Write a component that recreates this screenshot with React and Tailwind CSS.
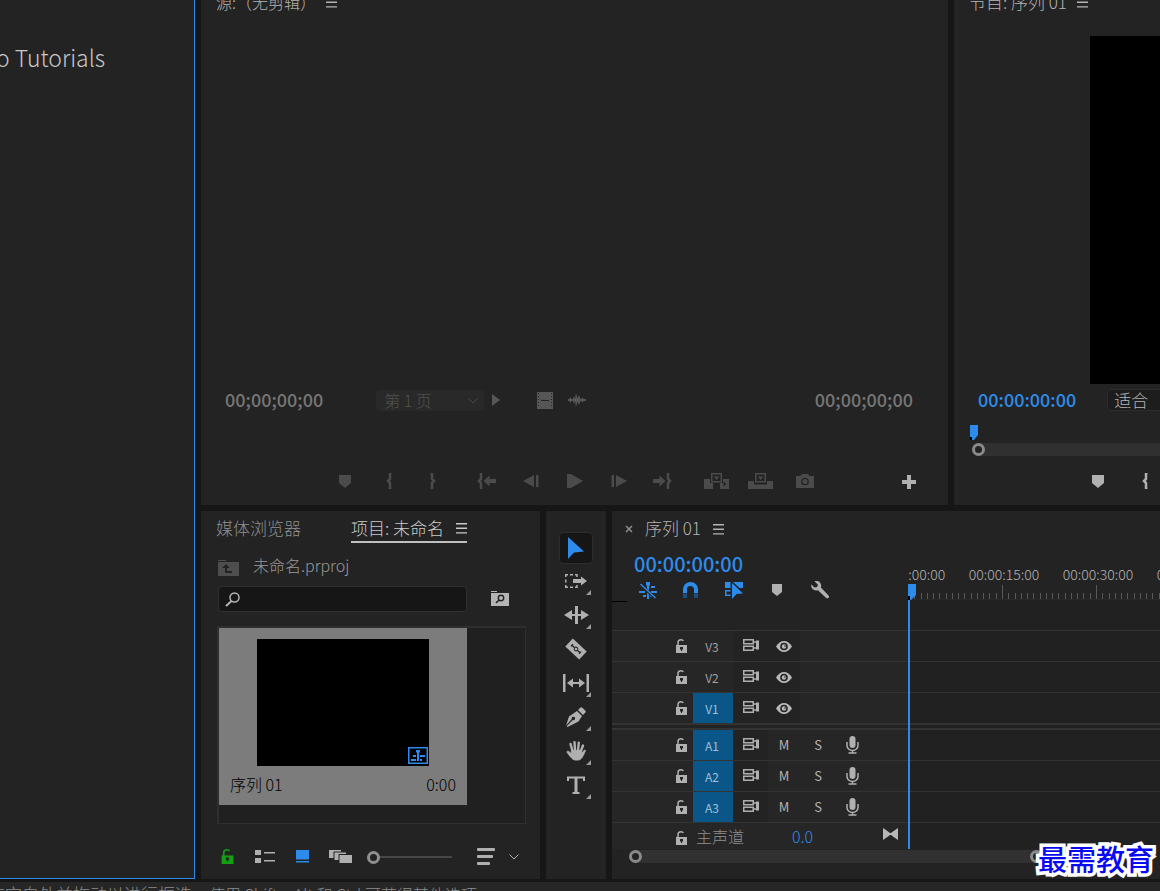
import React, { useState } from "react";

const TOOLS = [
  { id: "select", label: "选择工具" },
  { id: "track", label: "向前选择轨道工具", more: true },
  { id: "ripple", label: "波纹编辑工具", more: true },
  { id: "razor", label: "剃刀工具" },
  { id: "slip", label: "外滑工具", more: true },
  { id: "pen", label: "钢笔工具", more: true },
  { id: "hand", label: "手形工具", more: true },
  { id: "type", label: "文字工具", more: true },
];

const TRANSPORT = [
  [
    { id: "marker", label: "添加标记" },
    { id: "braceOpen", label: "标记入点" },
    { id: "braceClose", label: "标记出点" },
  ],
  [
    { id: "gotoIn", label: "转到入点" },
    { id: "stepBack", label: "后退一帧" },
    { id: "play", label: "播放" },
    { id: "stepForward", label: "前进一帧" },
    { id: "gotoOut", label: "转到出点" },
  ],
  [
    { id: "insert", label: "插入" },
    { id: "overwrite", label: "覆盖" },
    { id: "camera", label: "导出帧" },
  ],
];

const VIDEO_TRACKS = [
  { name: "V3", active: false },
  { name: "V2", active: false },
  { name: "V1", active: true },
];

const AUDIO_TRACKS = ["A1", "A2", "A3"];

const RULER = [
  "00:00:00:00",
  "00:00:15:00",
  "00:00:30:00",
  "00:00:45:00",
  "00:01:00:00",
  "00:01:15:00",
  "00:01:30:00",
  "00:01:45:00",
];

// width of 15 seconds on the ruler
const RULER_STEP = 94;

export default function App() {
  return (
    <div className="flex h-screen flex-col overflow-hidden bg-[#161616] font-['Noto_Sans_CJK_SC',sans-serif] text-base font-light text-[#b4b4b4]">
      <div className="flex min-h-0 flex-1 gap-1.5">
        <aside className="w-[195px] shrink-0 overflow-hidden border-r border-b border-[#2d8ceb] bg-[#232323] pt-10">
          <h2 className="-ml-1 text-[23px] leading-[34px] whitespace-nowrap text-[#c8c8c8]">
            o Tutorials
          </h2>
        </aside>
        <div className="flex min-w-0 flex-1 flex-col gap-1.5">
          <div className="flex min-h-0 flex-1 gap-1.5">
            <SourcePanel />
            <ProgramPanel />
          </div>
          <div className="flex h-[368px] shrink-0 gap-1.5">
            <ProjectPanel />
            <ToolsPanel />
            <TimelinePanel />
          </div>
        </div>
      </div>
      <footer className="mt-[3px] h-[9px] shrink-0 overflow-hidden bg-[#262626]">
        <p className="-ml-3 text-[17px] leading-6 whitespace-nowrap text-[#8c8c8c]">
          在空白处并拖动以进行框选。
          <span className="text-base leading-6">
            使用 Shift、Alt 和 Ctrl 可获得其他选项
          </span>
        </p>
      </footer>
      <div className="absolute right-1.5 bottom-[13px] text-[29px] leading-10 font-medium text-[#0a0af0] [-webkit-text-stroke:7px_white] [paint-order:stroke_fill]">
        最需教育
      </div>
    </div>
  );
}

function SourcePanel() {
  return (
    <section className="flex min-w-0 flex-1 flex-col overflow-hidden bg-[#232323]">
      <header className="-mt-4 flex h-9 shrink-0 items-center gap-2.5 pl-[15px]">
        <h2 className="leading-6">源:（无剪辑）</h2>
        <MenuButton />
      </header>
      <div className="flex-1" />
      <div className="flex h-8 items-center pr-[35px] pb-0.5 pl-6">
        <Timecode value="00;00;00;00" className="pb-0.5 text-lg text-[#767676]" />
        <div className="relative ml-[53px] w-[108px]">
          <select
            aria-label="页"
            disabled
            className="block h-[21px] w-full appearance-none rounded-sm bg-[#292929] pl-2 text-base leading-5 text-[#505050] opacity-100"
          >
            <option>第 1 页</option>
          </select>
          <Chevron className="pointer-events-none absolute top-2 right-1.5 text-[#4a4a4a]" />
        </div>
        <button aria-label="下一页" className="ml-2 text-[#565656]">
          <svg width="9" height="12" viewBox="0 0 9 12" fill="currentColor">
            <path d="M0 0l8 6-8 6z" />
          </svg>
        </button>
        <button aria-label="仅拖动视频" className="ml-9 text-[#565656]">
          <svg width="16" height="17" viewBox="0 0 16 17" fill="currentColor">
            <path d="M0 0h16v17H0z" />
            <path
              d="M1.500 1v15M14.500 1v15"
              stroke="#232323"
              strokeDasharray="1 2"
              strokeWidth="1"
            />
            <path d="M4 8h8v1H4z" fill="#232323" />
          </svg>
        </button>
        <button aria-label="仅拖动音频" className="ml-[15px] text-[#565656]">
          <svg width="18" height="14" viewBox="0 0 18 14" fill="currentColor">
            <path d="M0 6h1.500l1-2 1 2h1.500l1-3 1 3L8 0l1.500 5.500L11 2l1.500 4h1L14.500 4l1 2H18v2h-2.500l-1 2-1-2h-1L11 12 9.500 8.500 8 14 7 8 6 11 5 8H3.500l-1 2-1-2H0z" />
          </svg>
        </button>
        <Timecode
          value="00;00;00;00"
          className="ml-auto pb-0.5 text-lg text-[#767676]"
        />
      </div>
      <div className="mt-10 grid h-12 shrink-0 grid-cols-[1fr_auto_1fr] items-center">
        <div />
        <div className="flex gap-2.5">
          {TRANSPORT.map((group, i) => (
            <div key={i} className="flex">
              {group.map((b) => (
                <button
                  key={b.id}
                  aria-label={b.label}
                  disabled
                  className="flex h-8 w-11 items-center justify-center text-[#4b4b4b]"
                >
                  <TransportIcon id={b.id} />
                </button>
              ))}
            </div>
          ))}
        </div>
        <button
          aria-label="按钮编辑器"
          className="mt-0.5 mr-8 justify-self-end text-[#b0b0b0]"
        >
          <svg width="14" height="14" viewBox="0 0 14 14" fill="currentColor">
            <path d="M5 0h4v5h5v4H9v5H5V9H0V5h5z" />
          </svg>
        </button>
      </div>
    </section>
  );
}

function ProgramPanel() {
  return (
    <section className="flex w-[206px] shrink-0 flex-col overflow-hidden bg-[#232323]">
      <header className="-mt-4 flex h-9 shrink-0 items-center gap-2.5 pl-[15px]">
        <h2 className="text-[17px] leading-6 whitespace-nowrap">
          节目: 序列 01
        </h2>
        <MenuButton />
      </header>
      <div className="mt-4 ml-[136px] min-h-0 flex-1 bg-black" />
      <div className="mt-px flex h-8 items-center pb-0.5 pl-6">
        <Timecode value="00:00:00:00" className="pb-0.5 text-lg text-[#2d8ceb]" />
        <select
          aria-label="缩放级别"
          className="ml-[31px] h-[22px] w-24 shrink-0 appearance-none rounded-sm border border-[#2c2c2c] bg-[#1d1d1d] pl-1.5 text-[17px] leading-5"
        >
          <option>适合</option>
        </select>
      </div>
      <div className="h-10 pt-2 pl-4">
        <svg width="8" height="15" viewBox="0 0 8 15" className="block text-[#2d8ceb]">
          <path d="M0 0h8v10l-4 5H0z" fill="currentColor" />
          <path d="M0 12h2v3H0z" fill="#000" />
        </svg>
        <div className="mt-[3px] ml-0.5 flex h-[13px] items-center rounded-l-full bg-[#303030]">
          <Knob />
        </div>
      </div>
      <div className="flex h-12 items-center pl-[122px] text-[#b0b0b0]">
        <button
          aria-label="添加标记"
          className="flex h-8 w-11 shrink-0 items-center justify-center"
        >
          <TransportIcon id="marker" />
        </button>
        <button
          aria-label="标记入点"
          className="flex h-8 w-[50px] shrink-0 items-center justify-center"
        >
          <TransportIcon id="braceOpen" />
        </button>
      </div>
    </section>
  );
}

function ProjectPanel() {
  const [query, setQuery] = useState("");

  return (
    <section className="flex w-[339px] shrink-0 flex-col bg-[#232323]">
      <header className="flex h-9 shrink-0 items-center pl-[15px] text-[17px]">
        <button className="pb-0.5 text-[#8f8f8f]">媒体浏览器</button>
        <div className="ml-[50px] flex h-7 w-[116px] items-center justify-between border-b-2 border-[#c0c0c0] text-[#cacaca]">
          <button className="whitespace-nowrap">项目: 未命名</button>
          <MenuButton />
        </div>
      </header>
      <div className="flex h-[38px] shrink-0 items-center pl-[17px] text-[#999999]">
        <svg width="21" height="16" viewBox="0 0 21 16" className="mt-1">
          <path d="M0 0h8v1H0zM0 2h21v14H0z" fill="#4e4e4e" />
          <path d="M4 8l4-4 4 4H9v3h5v2H7V8z" fill="#232323" />
        </svg>
        <span className="ml-3.5 pb-0.5">未命名.prproj</span>
      </div>
      <div className="mt-px flex h-[26px] shrink-0 items-center pl-[17px]">
        <div className="relative w-[249px]">
          <input
            type="text"
            aria-label="搜索"
            value={query}
            onChange={(e) => setQuery(e.target.value)}
            className="block h-[26px] w-full rounded-sm border border-[#2f2f2f] bg-[#161616] pl-9 text-sm outline-none"
          />
          <svg
            width="16"
            height="16"
            viewBox="0 0 16 16"
            fill="none"
            stroke="#b4b4b4"
            className="pointer-events-none absolute top-1.5 left-[7px]"
          >
            <circle cx="9.500" cy="5.500" r="4.500" strokeWidth="1.500" />
            <path d="M6.500 9L1 14" strokeWidth="2" />
          </svg>
        </div>
        <button aria-label="从查询创建新的搜索素材箱" className="ml-6 pb-0.5">
          <svg width="18" height="15" viewBox="0 0 18 15">
            <path d="M0 0h6v1H0zM0 2h18v13H0z" fill="#b4b4b4" />
            <circle
              cx="10"
              cy="7"
              r="2.700"
              fill="none"
              stroke="#232323"
              strokeWidth="1.400"
            />
            <path d="M8 9l-3 3" stroke="#232323" strokeWidth="1.600" />
          </svg>
        </button>
      </div>
      <div className="mt-3.5 mr-3.5 ml-4 h-[198px] shrink-0 border-2 border-r border-b border-[#2f2f2f] bg-[#202020]">
        <figure className="h-[177px] w-[248px] bg-[#7c7c7c] px-[11px] pt-[11px] text-black">
          <div className="mx-auto flex h-[127px] w-[172px] items-end justify-end bg-black pr-px pb-0.5">
            <svg width="20" height="17" viewBox="0 0 20 17" fill="#2d8ceb">
              <path d="M.75.75h18.500v15.500H.75z" fill="#000" stroke="#2d8ceb" strokeWidth="1.500" />
              <path d="M8 3h4v2l-1 1v8H9V6L8 5zM5 8h3v2H5zM3 12h5v2H3zM12 8h5v2h-5zM12 12h2v2h-2z" />
            </svg>
          </div>
          <figcaption className="mt-1.5 flex justify-between leading-6">
            <span>序列 01</span>
            <span>0:00</span>
          </figcaption>
        </figure>
      </div>
      <div className="flex flex-1 items-center pt-2.5 pl-5 text-[#b0b0b0]">
        <button aria-label="项目可写" className="text-[#14a014]">
          <LockIcon size="lg" />
        </button>
        <button aria-label="列表视图" className="ml-[21px]">
          <svg width="20" height="13" viewBox="0 0 20 13" fill="currentColor">
            <path d="M0 0h6v5H0zM0 8h6v5H0zM9 2h11v1.500H9zM9 10h11v1.500H9z" />
          </svg>
        </button>
        <button aria-label="图标视图" className="ml-[21px]">
          <svg width="13" height="13" viewBox="0 0 13 13" fill="#2d8ceb">
            <path d="M0 0h13v9.500H0zM0 11h13v1.500H0z" />
          </svg>
        </button>
        <button aria-label="自由变换视图" className="ml-5">
          <svg width="23" height="13" viewBox="0 0 23 13" fill="currentColor">
            <path d="M0 0h12v1.500H4.500V8H0zM5.500 2.500H17V4H9.500v6h-4zM10.500 5H23v8H10.500z" />
          </svg>
        </button>
        <input
          type="range"
          aria-label="图标大小"
          min="0"
          max="100"
          defaultValue="0"
          className="ml-[15px] h-[13px] w-[85px] appearance-none bg-transparent [&::-webkit-slider-runnable-track]:h-0.5 [&::-webkit-slider-runnable-track]:bg-[#464646] [&::-webkit-slider-thumb]:-mt-[5px] [&::-webkit-slider-thumb]:size-[13px] [&::-webkit-slider-thumb]:appearance-none [&::-webkit-slider-thumb]:rounded-full [&::-webkit-slider-thumb]:border-[3px] [&::-webkit-slider-thumb]:border-[#8f8f8f] [&::-webkit-slider-thumb]:bg-[#232323]"
        />
        <button aria-label="排序图标" className="ml-[25px] flex items-center gap-3.5">
          <svg width="18" height="17" viewBox="0 0 18 17" fill="currentColor">
            <rect width="18" height="3" rx="1" />
            <rect y="7" width="16" height="3" rx="1" />
            <rect y="14" width="13" height="3" rx="1" />
          </svg>
          <Chevron />
        </button>
      </div>
    </section>
  );
}

function ToolsPanel() {
  const [tool, setTool] = useState("select");

  return (
    <nav className="flex w-[60px] shrink-0 flex-col items-center bg-[#232323] pt-5">
      {TOOLS.map((t) => (
        <button
          key={t.id}
          aria-label={t.label}
          onClick={() => setTool(t.id)}
          className="relative flex h-[34px] w-[34px] items-center justify-center text-[#b0b0b0]"
        >
          <span
            className={
              tool === t.id
                ? "flex h-8 w-[34px] items-center justify-center rounded-sm border border-[#2d2d2d] bg-[#161616] text-[#2d8ceb]"
                : "flex h-8 w-[34px] items-center justify-center pb-0.5"
            }
          >
            <ToolIcon id={t.id} />
          </span>
          {t.more && (
            <svg
              width="5"
              height="5"
              viewBox="0 0 5 5"
              className="absolute right-0.5 bottom-1"
            >
              <path d="M5 0v5H0z" fill="#9a9a9a" />
            </svg>
          )}
        </button>
      ))}
    </nav>
  );
}

function TimelinePanel() {
  return (
    <section className="flex min-w-0 flex-1 flex-col overflow-hidden bg-[#232323]">
      <header className="flex h-9 shrink-0 items-center pl-[13px]">
        <button aria-label="关闭" className="text-[#8f8f8f]">
          <svg width="8" height="8" viewBox="0 0 8 8" stroke="currentColor" strokeWidth="1.500">
            <path d="M1 1l6 6M7 1L1 7" />
          </svg>
        </button>
        <h2 className="mr-3 ml-3 pb-0.5 text-[17px]">序列 01</h2>
        <MenuButton />
      </header>

      <div className="flex">
        {/* Track headers */}
        <div className="w-[296px] shrink-0">
          <div className="h-[83px] pt-0.5">
            <Timecode
              value="00:00:00:00"
              className="block h-[30px] pl-[22px] text-xl leading-[30px] text-[#2d8ceb]"
            />
            <TimelineToolbar />
            <div className="h-px w-[15px] bg-black" />
          </div>
          {VIDEO_TRACKS.map((t) => (
            <div
              key={t.name}
              className="flex h-[31px] items-center border-t border-[#333333] bg-[#262626] pl-16"
            >
              <TrackCommon name={t.name} active={t.active} />
              <button
                aria-label="切换轨道输出"
                className="flex h-full w-8 items-center justify-center bg-[#232323]"
              >
                <svg width="16" height="11" viewBox="0 0 16 11">
                  <path
                    d="M0 5.500C2 2 5 0 8 0s6 2 8 5.500C14 9 11 11 8 11S2 9 0 5.500z"
                    fill="#b8b8b8"
                  />
                  <circle cx="8" cy="5.500" r="3.800" fill="#232323" />
                  <circle cx="8" cy="5.500" r="2.200" fill="#b8b8b8" />
                  <circle cx="9" cy="5" r=".8" fill="#232323" />
                </svg>
              </button>
            </div>
          ))}
          <div className="h-[7px] border-y-2 border-[#333333]" />
          {AUDIO_TRACKS.map((name) => (
            <div
              key={name}
              className="flex h-[31px] items-center border-b border-[#333333] bg-[#262626] pl-16 text-[13px] font-normal"
            >
              <TrackCommon name={name} active />
              <button aria-label="静音轨道" className="w-8">
                M
              </button>
              <button aria-label="独奏轨道" className="w-9">
                S
              </button>
              <button aria-label="画外音录制" className="flex w-8 justify-center">
                <svg width="13" height="18" viewBox="0 0 13 18">
                  <rect x="3.500" y="0" width="6" height="12" rx="3" fill="#b0b0b0" />
                  <path
                    d="M1 6v3.500a5.500 5 0 0 0 11 0V6M6.500 14v3M2.500 17h8"
                    fill="none"
                    stroke="#b0b0b0"
                    strokeWidth="1.500"
                  />
                </svg>
              </button>
            </div>
          ))}
          <div className="flex h-[26px] items-center bg-[#262626] pr-2.5 pl-16">
            <button aria-label="锁定轨道" className="pt-1">
              <LockIcon />
            </button>
            <span className="ml-[9px] leading-6 text-[#8f8f8f]">主声道</span>
            <span className="ml-12 leading-6 text-[#2d8ceb]">0.0</span>
            <svg width="15" height="12" viewBox="0 0 15 12" className="mb-1 ml-auto" fill="#b8b8b8">
              <path d="M0 0l6.500 4.500v3L0 12zM15 0L8.500 4.500v3L15 12z" />
              <path d="M6 5h3v2H6z" />
            </svg>
          </div>
        </div>

        {/* Ruler and lanes */}
        <div className="relative min-w-0 flex-1 overflow-hidden bg-[#212121]">
          <div className="h-[83px]">
            <Ruler />
          </div>
          {VIDEO_TRACKS.map((t) => (
            <div key={t.name} className="h-[31px] border-t border-[#333333]" />
          ))}
          <div className="h-[7px] border-y-2 border-[#333333]" />
          {AUDIO_TRACKS.map((name) => (
            <div key={name} className="h-[31px] border-b border-[#333333]" />
          ))}
          <div className="h-[26px]" />
          <div className="absolute top-[37px] bottom-0 left-0">
            <svg width="8" height="16" viewBox="0 0 8 16" className="block">
              <path d="M0 0h8v11l-5 5H0z" fill="#2d8ceb" />
              <path d="M0 12h2v4H0z" fill="#000" />
            </svg>
            <div className="h-full w-0.5 bg-[#2d8ceb]" />
          </div>
        </div>
      </div>

      <div className="mt-px mr-[117px] ml-[17px] flex h-[13px] shrink-0 items-center justify-between rounded-full bg-[#313131]">
        <Knob />
        <Knob />
      </div>
    </section>
  );
}

function TimelineToolbar() {
  const cell = "flex h-[22px] w-[43px] items-center justify-center";
  return (
    <div className="flex pl-3.5 text-[#2d8ceb]">
      <button aria-label="将序列作为嵌套插入" className={cell}>
        <svg width="18" height="17" viewBox="0 0 18 17">
          <path
            d="M7 0h4v3l-1 1v13H8V4L7 3zM4 5h3v2H4zM0 9h6v2H0zM4 13h3v2H4zM12 4h4v2h-4zM12 9h6v2h-6zM11 13h4v2h-4z"
            fill="currentColor"
          />
          <path d="M1 2l15 14" stroke="#232323" strokeWidth="3" />
          <path d="M1.500 2l15 14" stroke="currentColor" strokeWidth="1.500" />
        </svg>
      </button>
      <button aria-label="在时间轴中对齐" className={cell}>
        <svg width="15" height="16" viewBox="0 0 15 16" fill="none" strokeWidth="4">
          <path d="M2 11V7a5.500 5 0 0 1 11 0v4" stroke="currentColor" />
          <path d="M2 11.500V16M13 11.500V16" stroke="#1b5083" />
        </svg>
      </button>
      <button aria-label="链接选择项" className={cell}>
        <svg width="18" height="17" viewBox="0 0 18 17" fill="currentColor">
          <path d="M0 0h5.500v6H0zM8 0h10v6h-3.500z" />
          <path d="M5.500 8.750H.75v4.500H5.500" fill="none" stroke="currentColor" strokeWidth="1.500" />
          <path d="M7 1l11 10.500-6.500.5L7 17z" />
        </svg>
      </button>
      <button aria-label="添加标记" className={`${cell} text-[#b0b0b0]`}>
        <svg width="10" height="12" viewBox="0 0 10 12" fill="currentColor">
          <path d="M0 0h10v8l-5 4-5-4z" />
        </svg>
      </button>
      <button aria-label="时间轴显示设置" className={`${cell} text-[#b0b0b0]`}>
        <svg width="18" height="18" viewBox="0 0 18 18" fill="currentColor">
          <path d="M3.500.5C5.500-.4 8 0 9.300 1.900c1 1.500 1.100 3 .6 4.500l7.600 8c.7.800.7 1.700 0 2.400-.8.800-1.800.8-2.600 0L7 9.200C4.800 9.800 2.500 9.300 1.200 7.600.2 6.300 0 4.800.3 3.600l3.200 3 2.700-.6.700-2.600z" />
        </svg>
      </button>
    </div>
  );
}

function TrackCommon({ name, active }) {
  return (
    <>
      <button aria-label={`锁定 ${name}`} className="w-[17px]">
        <LockIcon />
      </button>
      <button
        className={
          active
            ? "h-full w-10 bg-[#0a5688] pt-0.5 pr-0.5 text-xs font-normal text-[#9fc0d6]"
            : "h-full w-10 pt-0.5 pr-0.5 text-xs font-normal text-[#a0a0a0]"
        }
      >
        {name}
      </button>
      <button
        aria-label="切换同步锁定"
        className="flex h-full w-[35px] items-center justify-center bg-[#232323] pb-0.5"
      >
        <svg
          width="16"
          height="12"
          viewBox="0 0 16 12"
          fill="none"
          stroke="#b0b0b0"
          strokeWidth="1.500"
        >
          <path d="M.75.75h9.500v4H.75zM.75 7.250h9.500v4H.75z" />
          <path d="M14.500 1.500v9" strokeWidth="3" />
          <path d="M11 3h3M11 9h3" strokeWidth="1.500" />
        </svg>
      </button>
    </>
  );
}

function Ruler() {
  const ticks = [];
  for (let i = 0; i <= (RULER.length - 1) * 15; i++) {
    const x = 0.5 + Math.round((i * RULER_STEP) / 15);
    ticks.push(<path key={i} d={`M${x} ${i % 15 === 0 ? 0 : 8}V14`} />);
  }

  return (
    <div className="overflow-hidden border-b border-[#282828] bg-[#232323] pt-3.5">
      <div className="-ml-[45px] flex text-sm leading-[26px]">
        {RULER.map((label) => (
          <span key={label} className="w-[94px] shrink-0 text-center">
            {label}
          </span>
        ))}
      </div>
      <svg
        width={RULER_STEP * RULER.length}
        height="14"
        className="-mt-0.5 block max-w-none"
        stroke="#585858"
      >
        {ticks}
      </svg>
    </div>
  );
}

function Timecode({ value, className }) {
  return <span className={`font-medium ${className}`}>{value}</span>;
}

function MenuButton() {
  return (
    <button aria-label="面板菜单">
      <svg width="11" height="11" viewBox="0 0 11 11" fill="currentColor">
        <path d="M0 0h11v1.400H0zM0 4.600h11V6H0zM0 9.200h11v1.400H0z" />
      </svg>
    </button>
  );
}

function Knob() {
  return (
    <span className="size-[13px] rounded-full border-[3px] border-[#8a8a8a] bg-[#232323]" />
  );
}

function Chevron({ className }) {
  return (
    <svg
      width="10"
      height="6"
      viewBox="0 0 10 6"
      fill="none"
      stroke="currentColor"
      className={className}
    >
      <path d="M.5.5L5 5 9.500.5" />
    </svg>
  );
}

function LockIcon({ size = "sm" }) {
  return (
    <svg
      width={size === "lg" ? 13 : 11}
      height={size === "lg" ? 15 : 14}
      viewBox="0 0 11 14"
    >
      <path d="M0 6h11v8H0z" fill={size === "lg" ? "currentColor" : "#b0b0b0"} />
      <path
        d="M2 7V3.500C2 1.500 3.500.75 5 .75c1.200 0 2 .4 2.200 1.250"
        fill="none"
        stroke={size === "lg" ? "currentColor" : "#b0b0b0"}
        strokeWidth="1.500"
      />
      <path d="M4 8h3v2.500H6V12H5v-1.500H4z" fill="#232323" />
    </svg>
  );
}

function TransportIcon({ id }) {
  switch (id) {
    case "marker":
      return (
        <svg width="12" height="13" viewBox="0 0 12 13" fill="currentColor">
          <path d="M0 0h12v8l-6 5-6-5z" />
        </svg>
      );
    case "braceOpen":
      return (
        <svg width="6" height="16" viewBox="0 0 6 16" fill="none" stroke="currentColor" strokeWidth="2.500">
          <path d="M5.500 0H4v6L2 8l2 2v6h1.500" />
        </svg>
      );
    case "braceClose":
      return (
        <svg width="6" height="16" viewBox="0 0 6 16" fill="none" stroke="currentColor" strokeWidth="2.500">
          <path d="M.5 0H2v6l2 2-2 2v6H.5" />
        </svg>
      );
    case "gotoIn":
      return (
        <svg width="19" height="16" viewBox="0 0 19 16">
          <path d="M5 0H4v6L2 8l2 2v6h1" fill="none" stroke="currentColor" strokeWidth="2.500" />
          <path d="M6.500 8l6-5.500V6H19v4h-6.500v3.500z" fill="currentColor" />
        </svg>
      );
    case "gotoOut":
      return (
        <svg width="19" height="16" viewBox="0 0 19 16">
          <path d="M14 0h1v6l2 2-2 2v6h-1" fill="none" stroke="currentColor" strokeWidth="2.500" />
          <path d="M12.500 8l-6-5.500V6H0v4h6.500v3.500z" fill="currentColor" />
        </svg>
      );
    case "stepBack":
      return (
        <svg width="16" height="12" viewBox="0 0 16 12" fill="currentColor">
          <path d="M11 0v12L0 6zM13 0h2.500v12H13z" />
        </svg>
      );
    case "stepForward":
      return (
        <svg width="16" height="12" viewBox="0 0 16 12" fill="currentColor">
          <path d="M5 0v12l11-6zM.5 0H3v12H.5z" />
        </svg>
      );
    case "play":
      return (
        <svg width="16" height="14" viewBox="0 0 16 14" fill="currentColor">
          <path d="M0 0h4l12 7-12 7H0z" />
        </svg>
      );
    case "insert":
      return (
        <svg width="25" height="16" viewBox="0 0 25 16" fill="currentColor">
          <path d="M0 6h6v4h3v6H0zM16 10h3V6h6v10h-9z" />
          <path d="M7.750.75h9.500v8h-9.500z" fill="none" stroke="currentColor" strokeWidth="1.500" />
          <path d="M9.750 3.500h5.500L12.500 7z" />
          <path d="M19.500 8.500l3 2.500-3 2.500z" fill="#232323" />
        </svg>
      );
    case "overwrite":
      return (
        <svg width="25" height="16" viewBox="0 0 25 16" fill="currentColor">
          <path d="M0 8h6v3.500h13V8h6v8H0z" />
          <path d="M7.750.75h9.500v8h-9.500z" fill="none" stroke="currentColor" strokeWidth="1.500" />
          <path d="M9.750 3.500h5.500L12.500 7z" />
        </svg>
      );
    case "camera":
      return (
        <svg width="18" height="14" viewBox="0 0 18 14">
          <path d="M0 2h4.500L6 0h6l1.500 2H18v12H0z" fill="currentColor" />
          <circle cx="9" cy="7.500" r="3.200" fill="none" stroke="#232323" strokeWidth="1.300" />
        </svg>
      );
    default:
      return null;
  }
}

function ToolIcon({ id }) {
  switch (id) {
    case "select":
      return (
        <svg width="16" height="22" viewBox="0 0 16 22" fill="currentColor">
          <path d="M0 0l16 14.500-10 1L0 22z" />
        </svg>
      );
    case "track":
      return (
        <svg width="22" height="14" viewBox="0 0 22 14">
          <path
            d="M.75 3V.75H3M5 .75h3M10 .75h2V3M.75 5.500v3M.75 11v2.250H3M5 13.250h3M10 13.250h2V11"
            fill="none"
            stroke="currentColor"
            strokeWidth="1.500"
          />
          <path d="M8 5h8V2.500l6 4.500-6 4.500V9H8z" fill="currentColor" />
        </svg>
      );
    case "ripple":
      return (
        <svg width="25" height="18" viewBox="0 0 25 18" fill="currentColor">
          <path d="M11 0h3v18h-3zM0 9l8-5v4h9V4l8 5-8 5v-4H8v4z" />
        </svg>
      );
    case "razor":
      return (
        <svg width="22" height="22" viewBox="0 0 22 22">
          <g transform="rotate(43 11 11)">
            <path d="M1.500 5.500h19v11h-19z" fill="currentColor" />
            <path
              d="M5 11h12M5.500 9.500v3M16.500 9.500v3"
              stroke="#232323"
              strokeWidth="1.300"
            />
            <circle cx="11" cy="11" r="1.800" fill="#b0b0b0" stroke="#232323" />
          </g>
        </svg>
      );
    case "slip":
      return (
        <svg width="26" height="18" viewBox="0 0 26 18" fill="currentColor">
          <path d="M0 0h2.500v18H0zM23.500 0H26v18h-2.500zM4 9l6-4.500V8h6V4.500L22 9l-6 4.500V10h-6v3.500z" />
        </svg>
      );
    case "pen":
      return (
        <svg width="20" height="20" viewBox="0 0 20 20" fill="currentColor">
          <path d="M14.200.8c.7-.7 1.500-.7 2.200 0l2.800 2.800c.7.700.7 1.500 0 2.200L17 8 12 3z" />
          <path d="M11 4l5 5-3.500 5.500L1.500 20l-.8-.7L6.800 13a1.700 1.700 0 1 0-1-1L0 18.500 3 9.500z" />
        </svg>
      );
    case "hand":
      return (
        <svg
          width="20"
          height="20"
          viewBox="0 0 20 20"
          fill="none"
          stroke="currentColor"
          strokeLinecap="round"
          strokeWidth="2.400"
        >
          <path d="M6.500 10L4.500 3M9 9.500L8.500 1.300M12 9.500l.8-7.800M14.500 11l2.500-6.500" />
          <path
            d="M5.500 9.500h9.500l.5 3 2.500-3c.8-.8 1.800-.2 1.300.7C17.500 13.500 16 19 12 19H9.500C6 19 4 15 1.200 11.500c-.7-1 .4-1.800 1.400-1.100L6 13z"
            fill="currentColor"
            strokeWidth="1"
          />
        </svg>
      );
    case "type":
      return (
        <svg
          width="18"
          height="18"
          viewBox="0 0 18 18"
          fill="none"
          stroke="currentColor"
          strokeWidth="2"
        >
          <path d="M1 5V1.500h16V5M5.500 17h7" />
          <path d="M9 1.500V17" strokeWidth="3" />
        </svg>
      );
    default:
      return null;
  }
}
